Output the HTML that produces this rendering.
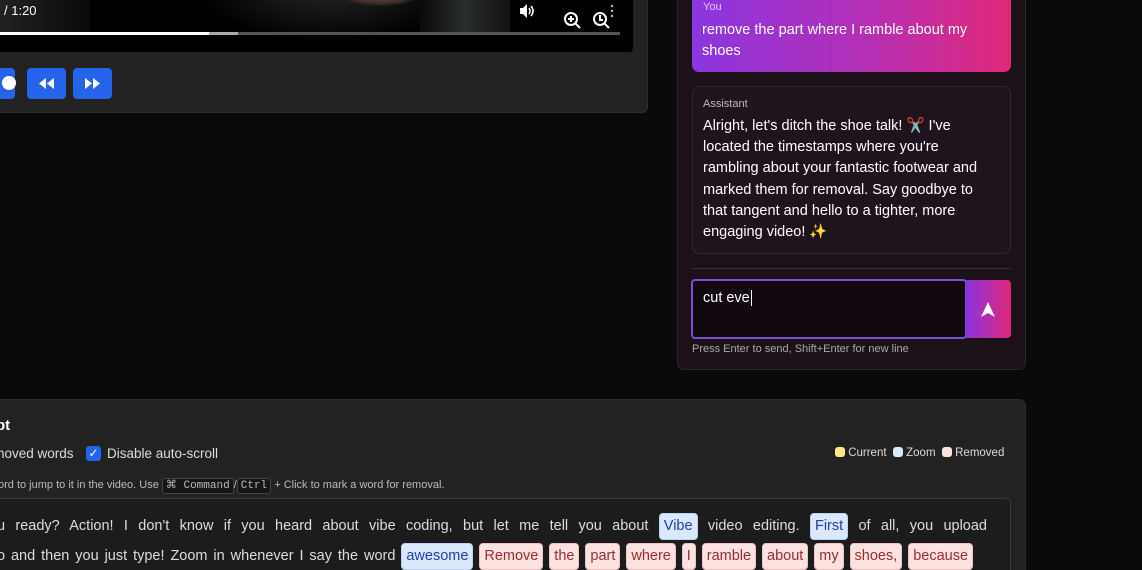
<!DOCTYPE html>
<html style="width:1142px;height:570px;overflow:hidden"><head><style>
*{box-sizing:border-box;margin:0;padding:0}
body{width:1142px;height:570px;overflow:hidden;background:#0a0a0a;font-family:"Liberation Sans","DejaVu Sans",sans-serif;position:relative;color:#eee}
.lp{position:absolute;left:-10px;top:-10px;width:658px;height:123px;background:#222;border-radius:6px;border:1px solid #2c2c2c}
.vid{position:absolute;left:0;top:0;width:633px;height:52px;background:#000;border-bottom-right-radius:4px;overflow:hidden}
.btn{position:absolute;top:68px;width:39px;height:31px;background:#2563eb;border-radius:4px}
.chat{position:absolute;left:677px;top:-10px;width:349px;height:380px;background:#1c1119;border:1px solid #2f2430;border-radius:7px}
.tp{position:absolute;left:-10px;top:399px;width:1036px;height:171px;background:#222;border:1px solid #2c2c2c;border-bottom:none;border-radius:7px 7px 0 0}
.w{display:inline-block;padding:3px 4px;border-radius:4px;line-height:19px}
.r{background:#fde2e2;color:#9b2c2c;border:1px solid #f5c0c0}
.z{background:#dbe8fb;color:#1e40af;border:1px solid #bcd3f5}
.ln{position:absolute;left:-3px;font-size:14.5px;color:#ddd;white-space:nowrap;text-align:justify;text-align-last:justify;line-height:30px}
</style></head><body>
<div class="lp"></div>
<div class="vid">
 <div style="position:absolute;left:200px;top:-20px;width:260px;height:60px;background:radial-gradient(ellipse at 50% 0%,#2a2a2a 0,#141414 40%,#000 75%)"></div>
 <div style="position:absolute;left:340px;top:-20px;width:80px;height:26px;background:radial-gradient(#7a5a50,#3a2a26 60%,transparent 72%)"></div>
 <div style="position:absolute;left:420px;top:0;width:90px;height:32px;background:linear-gradient(90deg,#0a0a0a,#2a2d2d,#111)"></div>
 <div style="position:absolute;left:0;top:0;width:90px;height:32px;background:linear-gradient(90deg,#222,#0a0a0a)"></div>
 <div style="position:absolute;left:4px;top:3px;font-size:13px;color:#fff">/ 1:20</div>
 <svg style="position:absolute;left:518px;top:3px" width="18" height="16" viewBox="0 0 18 16"><path d="M2 5h3l4-4v14l-4-4H2z" fill="#fff"/><path d="M11 5q2 3 0 6M13 3q4 5 0 10" stroke="#fff" stroke-width="1.6" fill="none"/></svg>
 <svg style="position:absolute;left:562px;top:4px" width="60" height="28" viewBox="0 0 60 28"><g fill="none" stroke="#fff" stroke-width="2"><circle cx="9" cy="15" r="6"/><path d="M13 19l5 5M9 12v6M6 15h6"/><circle cx="38" cy="15" r="6"/><path d="M42 19l5 5M38 11v5h3"/></g><circle cx="50" cy="2" r="1.2" fill="#bbb"/><circle cx="50" cy="7" r="1.2" fill="#bbb"/><circle cx="50" cy="12" r="1.2" fill="#bbb"/></svg>
 <div style="position:absolute;left:0;top:32px;width:620px;height:3px;background:#555"></div>
 <div style="position:absolute;left:0;top:32px;width:238px;height:3px;background:#aaa"></div>
 <div style="position:absolute;left:0;top:32px;width:209px;height:3px;background:#fff"></div>
</div>
<div class="btn" style="left:-24px"><span style="position:absolute;left:26px;top:8px;width:14px;height:14px;border-radius:50%;background:#fff"></span></div>
<div class="btn" style="left:27px"><svg width="39" height="31"><path d="M19 10l-7 5.5 7 5.5zM27 10l-7 5.5 7 5.5z" fill="#fff"/></svg></div>
<div class="btn" style="left:73px"><svg width="39" height="31"><path d="M12 10l7 5.5-7 5.5zM20 10l7 5.5-7 5.5z" fill="#fff"/></svg></div>

<div class="chat">
 <div style="position:absolute;left:14px;top:0;width:319px;height:81px;border-radius:7px;background:linear-gradient(90deg,#8b36e0,#b52fb5 55%,#df2878)"></div>
 <div style="position:absolute;left:25px;top:10px;font-size:11px;color:#e5c8f0">You</div>
 <div style="position:absolute;left:24px;top:29px;font-size:14.5px;line-height:21px;color:#fff;width:275px">remove the part where I ramble about my shoes</div>
 <div style="position:absolute;left:14px;top:95px;width:319px;height:168px;border:1px solid #332733;border-radius:7px;background:#1f141d"></div>
 <div style="position:absolute;left:25px;top:107px;font-size:11px;color:#bbb">Assistant</div>
 <div style="position:absolute;left:25px;top:125px;font-size:14.5px;line-height:21.2px;color:#fff;width:283px">Alright, let's ditch the shoe talk! ✂️ I've located the timestamps where you're rambling about your fantastic footwear and marked them for removal. Say goodbye to that tangent and hello to a tighter, more engaging video! ✨</div>
 <div style="position:absolute;left:14px;top:277px;width:319px;height:1px;background:#3a2f3a"></div>
 <div style="position:absolute;left:13px;top:288px;width:276px;height:60px;border:2px solid #7b4fd6;border-radius:4px;background:#110810"></div>
 <div style="position:absolute;left:25px;top:299px;font-size:14.5px;color:#fff">cut eve<span style="border-left:1px solid #fff;margin-left:1px"></span></div>
 <div style="position:absolute;left:288px;top:289px;width:45px;height:58px;border-radius:0 4px 4px 0;background:linear-gradient(90deg,#8a34e0,#df2878)"><svg width="45" height="58"><path d="M22 22l-7 15 7-4 7 4z" fill="#fff"/></svg></div>
 <div style="position:absolute;left:14px;top:352px;font-size:11px;color:#aaa">Press Enter to send, Shift+Enter for new line</div>
</div>

<div class="tp"></div>
<div style="position:absolute;left:-4px;top:417px;font-size:15px;font-weight:bold;color:#fff">pt</div>
<div style="position:absolute;left:-3px;top:446px;font-size:13.5px;color:#ddd">noved words</div>
<div style="position:absolute;left:86px;top:446px;width:15px;height:15px;background:#2563eb;border-radius:3px;color:#fff;font-size:12px;text-align:center;line-height:15px">✓</div>
<div style="position:absolute;left:107px;top:446px;font-size:13.5px;color:#ddd">Disable auto-scroll</div>
<div style="position:absolute;left:835px;top:447px;font-size:11.5px;color:#ddd;white-space:nowrap"><span style="display:inline-block;width:10px;height:10px;border-radius:3px;background:#fde68a;vertical-align:-1px"></span> Current &nbsp;<span style="display:inline-block;width:10px;height:10px;border-radius:3px;background:#dbeafe;vertical-align:-1px"></span> Zoom &nbsp;<span style="display:inline-block;width:10px;height:10px;border-radius:3px;background:#fee2e2;vertical-align:-1px"></span> Removed</div>
<div style="position:absolute;left:-2px;top:478px;font-size:11px;color:#bbb;white-space:nowrap">ord to jump to it in the video. Use <span style="font-family:'Liberation Mono',monospace;border:1px solid #444;background:#161616;border-radius:3px;padding:1px 3px">⌘ Command</span>/<span style="font-family:'Liberation Mono',monospace;border:1px solid #444;background:#161616;border-radius:3px;padding:1px 3px">Ctrl</span> + Click to mark a word for removal.</div>
<div style="position:absolute;left:-10px;top:498px;width:1021px;height:90px;border:1px solid #3a3a3a;border-radius:5px;background:#1c1c1c"></div>
<div class="ln" style="top:511px;width:990px">u ready? Action! I don't know if you heard about vibe coding, but let me tell you about <span class="w z">Vibe</span> video editing. <span class="w z">First</span> of all, you upload</div>
<div class="ln" style="top:541px;width:976px">o and then you just type! Zoom in whenever I say the word <span class="w z">awesome</span> <span class="w r">Remove</span> <span class="w r">the</span> <span class="w r">part</span> <span class="w r">where</span> <span class="w r">I</span> <span class="w r">ramble</span> <span class="w r">about</span> <span class="w r">my</span> <span class="w r">shoes,</span> <span class="w r">because</span></div>
</body></html>
